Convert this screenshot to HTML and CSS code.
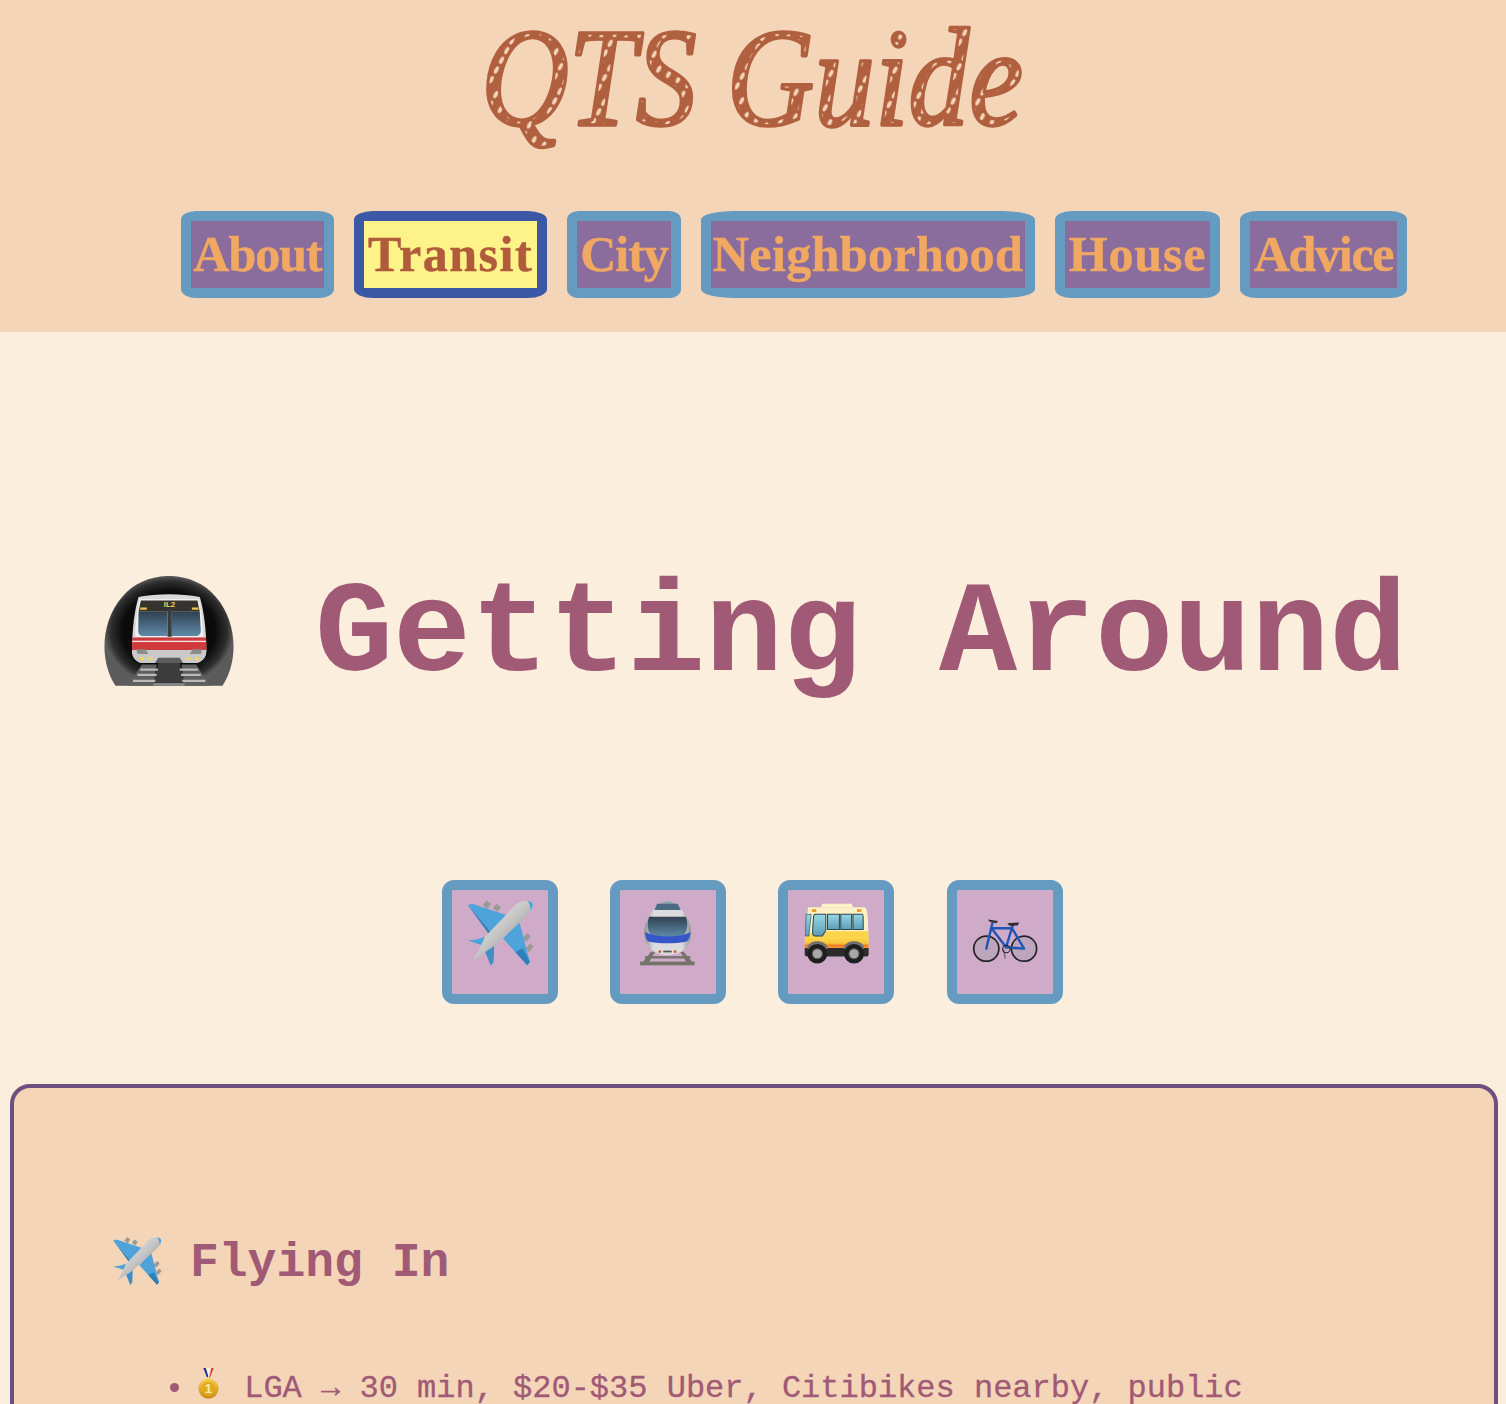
FILE: index.html
```html
<!DOCTYPE html>
<html lang="en">
<head>
    <meta charset="UTF-8">
    <meta name="viewport" content="width=device-width, initial-scale=1.0">
    <title>QTS Guide</title>
    <link rel="stylesheet" href="styles.css">
</head>
<body>
    <!-- shared emoji drawings -->
    <svg class="defs" aria-hidden="true">
        <defs>
            <linearGradient id="silver" x1="0" y1="0" x2="1" y2="1">
                <stop offset="0" stop-color="#f2f2f2"/><stop offset="0.5" stop-color="#c4c4c4"/><stop offset="0.8" stop-color="#8c8c8c"/><stop offset="1" stop-color="#6e6e6e"/>
            </linearGradient>
            <linearGradient id="glass" x1="0" y1="0" x2="0" y2="1">
                <stop offset="0" stop-color="#2f4150"/><stop offset="1" stop-color="#5f8aa8"/>
            </linearGradient>
            <linearGradient id="bodyGrey" x1="0" y1="0" x2="1" y2="0">
                <stop offset="0" stop-color="#8f9296"/><stop offset="0.2" stop-color="#dcdcde"/><stop offset="0.8" stop-color="#dcdcde"/><stop offset="1" stop-color="#8f9296"/>
            </linearGradient>
            <linearGradient id="busBand" x1="0" y1="0" x2="0" y2="1">
                <stop offset="0" stop-color="#fbd850"/><stop offset="0.55" stop-color="#f8c43c"/><stop offset="0.75" stop-color="#f07a2a"/><stop offset="1" stop-color="#f3a032"/>
            </linearGradient>
            <linearGradient id="busGlass" x1="0" y1="0" x2="0" y2="1">
                <stop offset="0" stop-color="#97d8e6"/><stop offset="1" stop-color="#5a9db8"/>
            </linearGradient>
            <linearGradient id="gold" x1="0" y1="0" x2="0" y2="1">
                <stop offset="0" stop-color="#f6d04a"/><stop offset="1" stop-color="#c98a16"/>
            </linearGradient>
            <radialGradient id="tunnel" cx="0.5" cy="0.5" r="0.5">
                <stop offset="0" stop-color="#000"/><stop offset="0.72" stop-color="#0c0c0c"/><stop offset="0.9" stop-color="#2e2e2e"/><stop offset="1" stop-color="#5b5b5b"/>
            </radialGradient>

            <symbol id="plane" viewBox="95 70 200 200">
                <g fill="#9a9a96">
                    <path d="M144 88 L156 74 L168 84 L158 100 Z"/>
                    <path d="M174 96 L186 84 L198 94 L188 108 Z"/>
                    <path d="M260 186 L276 170 L286 180 L272 196 Z"/>
                    <path d="M270 216 L284 200 L294 210 L280 226 Z"/>
                </g>
                <path d="M100 88 L113 84 L222 120 L172 172 Z" fill="#4fa3db"/>
                <path d="M100 88 L172 172 L160 170 Z" fill="#2f7fb8"/>
                <path d="M252 138 L283 255 L275 265 L204 186 Z" fill="#4fa3db"/>
                <path d="M283 255 L275 265 L240 226 L262 215 Z" fill="#2f7fb8"/>
                <path d="M100 192 L125 189 L168 176 L150 208 Z" fill="#4fa3db"/>
                <path d="M150 222 L178 208 L176 255 L168 266 Z" fill="#3f8fc6"/>
                <path d="M291 85 C285 71 258 72 242 86 L150 182 C146 195 126 235 113 252 C130 240 165 218 180 206 L277 117 C290 104 295 95 291 85 Z" fill="url(#silver)"/>
                <path d="M291 85 C288 78 282 76 276 76 C282 84 285 92 284 102 C290 96 293 91 291 85 Z" fill="#4fa3db"/>
            </symbol>

            <symbol id="medal" viewBox="590 870 76 104">
                <path d="M612 876 L619 876 L628 900 L624 906 Z" fill="#1d2f8f"/>
                <path d="M644 876 L637 876 L630 906 L632 906 Z" fill="#d8362b"/>
                <path d="M622 876 L634 876 L628 906 Z" fill="#f4f0e8"/>
                <circle cx="628" cy="939" r="31" fill="url(#gold)"/>
                <circle cx="628" cy="939" r="21" fill="#e2a91f"/>
                <text x="628" y="953" class="medal-num">1</text>
            </symbol>
        </defs>
    </svg>

    <header class="site-header">
        <h1 class="logo">
            <svg class="logo-rope" width="800" height="165" viewBox="0 0 800 165">
                <defs>
                    <pattern id="rope" width="11" height="11" patternUnits="userSpaceOnUse" patternTransform="rotate(28)">
                        <rect width="11" height="11" fill="#b0603f"/>
                        <ellipse cx="5.5" cy="5.5" rx="1.9" ry="4" fill="#f5d5b8"/>
                    </pattern>
                </defs>
                <text class="logo-text" x="128" y="125" textLength="542" lengthAdjust="spacingAndGlyphs">QTS Guide</text>
            </svg>
        </h1>
        <nav class="nav">
            <a class="nav-link w-about" href="#">About</a>
            <a class="nav-link w-transit active" href="#">Transit</a>
            <a class="nav-link w-city" href="#">City</a>
            <a class="nav-link w-hood" href="#">Neighborhood</a>
            <a class="nav-link w-house" href="#">House</a>
            <a class="nav-link w-advice" href="#">Advice</a>
        </nav>
    </header>

    <main>
        <h2 class="page-title">
            <svg class="metro" viewBox="40 35 395 330" aria-hidden="true">
                <path d="M75 365 C25 290 30 170 95 95 C165 10 310 10 380 95 C445 170 450 290 400 365 Z" fill="url(#tunnel)"/>
                <!-- track -->
                <path d="M190 365 L205 296 L270 296 L285 365 Z" fill="#3c3c3c"/>
                <path d="M112 365 L155 300 L200 300 L190 365 Z M362 365 L320 300 L275 300 L285 365 Z" fill="#5e605f"/>
                <g stroke="#b9b9b7" stroke-width="7">
                    <path d="M128 350 H196 M142 332 H200 M150 316 H204 M278 350 H348 M274 332 H334 M270 316 H325"/>
                </g>
                <path d="M190 357 H285 V365 H190 Z" fill="#8d8f8e"/>
                <!-- carriage -->
                <path d="M145 95 C200 84 275 84 331 95 C342 130 351 190 351 260 C351 280 335 296 315 296 L160 296 C140 296 125 280 125 260 C125 190 134 130 145 95 Z" fill="#d9d9d9"/>
                <path d="M148 101 H328 C335 135 340 170 341 217 H135 C136 170 141 135 148 101 Z" fill="#f0f0f0"/>
                <path d="M152 106 H324 L331 140 H145 Z" fill="#34332e"/>
                <path d="M145 140 H233 V214 H158 C149 214 144 208 144 198 Z" fill="url(#glass)"/>
                <path d="M246 140 H331 L334 198 C334 208 329 214 318 214 H246 Z" fill="url(#glass)"/>
                <rect x="233" y="132" width="13" height="84" fill="#3a3d40"/>
                <rect x="150" y="127" width="20" height="7" fill="#e9c24a"/>
                <rect x="307" y="127" width="20" height="7" fill="#e9c24a"/>
                <text x="239" y="126" class="metro-code">IL2</text>
                <path d="M126 218 H350 L351 256 H125 Z" fill="#cf3a3f"/>
                <rect x="126" y="228" width="224" height="4" fill="#f4e4e2"/>
                <path d="M125 256 H351 C350 280 335 296 315 296 L160 296 C140 296 126 280 125 256 Z" fill="#c9c9c9"/>
                <path d="M138 254 H166 L175 268 H142 Z M338 254 H310 L300 268 H334 Z" fill="#8b8b8b"/>
                <g fill="#f6d55c"><circle cx="155" cy="283" r="6"/><circle cx="180" cy="283" r="6"/><circle cx="297" cy="283" r="6"/><circle cx="322" cy="283" r="6"/></g>
                <path d="M205 280 H270 L280 296 H195 Z" fill="#5c5c5c"/>
            </svg>
            <span class="page-title-text">Getting Around</span>
        </h2>

        <div class="mode-row">
            <a class="mode-btn" href="#">
                <svg class="mode-icon"><use href="#plane"/></svg>
            </a>
            <a class="mode-btn" href="#">
                <svg class="mode-icon" viewBox="615 70 170 200">
                    <g fill="#76736a">
                        <rect x="618" y="254" width="160" height="11"/>
                        <path d="M650 225 L626 256 H644 L662 225 Z M746 225 L772 256 H754 L736 225 Z"/>
                        <rect x="632" y="238" width="134" height="7"/>
                    </g>
                    <path d="M698 76 C665 82 630 125 630 170 C630 208 655 233 699 235 C745 233 768 208 768 170 C768 125 732 82 698 76 Z" fill="url(#bodyGrey)"/>
                    <path d="M698 76 C685 78 672 84 662 100 H736 C726 84 712 78 698 76 Z" fill="#8ea3b0"/>
                    <path d="M668 84 H728 L738 102 H660 Z" fill="#4b6b85"/>
                    <path d="M645 122 H752 C760 135 758 168 745 176 C715 183 680 183 652 176 C638 168 638 135 645 122 Z" fill="url(#glass)"/>
                    <path d="M633 167 C665 184 735 184 766 167 C764 188 758 194 752 196 C715 202 680 202 646 196 C638 194 634 186 633 167 Z" fill="#3556c9"/>
                    <g fill="#d9532c"><circle cx="676" cy="225" r="4"/><circle cx="721" cy="225" r="4"/></g>
                    <rect x="686" y="222" width="25" height="5" fill="#555"/>
                </svg>
            </a>
            <a class="mode-btn" href="#">
                <svg class="mode-icon" viewBox="100 73 200 200">
                    <path d="M156 97 L160 87 H246 L250 97 Z" fill="#fdf3c8"/>
                    <path d="M118 97 H284 C291 100 294 110 295 170 L296 218 H108 L110 170 Z" fill="#fbf1c4"/>
                    <path d="M108 185 H296 V218 H108 Z" fill="url(#busBand)"/>
                    <path d="M110 176 C145 172 175 168 180 168 H295 V185 H108 Z" fill="#fbd44a"/>
                    <path d="M112 118 L127 118 L120 182 L110 182 Z" fill="url(#busGlass)" stroke="#35525e" stroke-width="2"/>
                    <path d="M140 118 H170 V165 L160 182 H140 C133 182 130 176 131 168 L134 124 C135 120 137 118 140 118 Z" fill="url(#busGlass)" stroke="#2c4650" stroke-width="3"/>
                    <path d="M175 118 H210 V163 H175 Z M214 118 H246 V163 H214 Z M250 118 H278 C280 118 280 122 280 163 H250 Z" fill="url(#busGlass)" stroke="#2c4650" stroke-width="3"/>
                    <rect x="129" y="103" width="13" height="8" fill="#ee9a26"/><rect x="262" y="103" width="13" height="8" fill="#ee9a26"/>
                    <path d="M108 217 H296 V236 C296 240 292 242 288 242 H116 C112 242 108 240 108 236 Z" fill="#2c2c2c"/>
                    <g fill="#707070"><path d="M115 220 C115 190 175 190 175 220 Z"/><path d="M223 220 C223 190 283 190 283 220 Z"/></g>
                    <g fill="#1e1e1e"><circle cx="145" cy="234" r="29"/><circle cx="253" cy="234" r="29"/></g>
                    <g fill="#a8a8a8" stroke="#555" stroke-width="3"><circle cx="145" cy="234" r="15"/><circle cx="253" cy="234" r="15"/></g>
                </svg>
            </a>
            <a class="mode-btn" href="#">
                <svg class="mode-icon" viewBox="605 75 200 200">
                    <g fill="#a79fae" fill-opacity="0.45" stroke="#232326" stroke-width="5">
                        <circle cx="650" cy="221" r="37"/><circle cx="761" cy="221" r="37"/>
                    </g>
                    <g fill="none" stroke="#1f55b5" stroke-width="7" stroke-linejoin="round" stroke-linecap="round">
                        <path d="M668 146 L650 221"/>
                        <path d="M670 161 H725"/>
                        <path d="M668 164 L708 217 L761 221 L725 160"/>
                        <path d="M728 152 L708 217"/>
                    </g>
                    <path d="M655 135 L684 140 L680 146 L660 142 Z M712 146 L747 144 L742 153 L718 154 Z" fill="#2d2d2f"/>
                    <path d="M700 222 L706 250" stroke="#6b6b6b" stroke-width="4"/>
                    <circle cx="709" cy="222" r="11" fill="none" stroke="#232326" stroke-width="3"/>
                </svg>
            </a>
        </div>

        <section class="card">
            <h3 class="card-title">
                <svg class="card-icon"><use href="#plane"/></svg>
                <span class="card-title-text">Flying In</span>
            </h3>
            <ul class="tips">
                <li>
                    <svg class="medal"><use href="#medal"/></svg>
                    <span>LGA → 30 min, $20-$35 Uber, Citibikes nearby, public</span>
                </li>
            </ul>
        </section>
    </main>
</body>
</html>
```

FILE: styles.css
```css
html, body {
    height: 100%;
}

body {
    margin: 0;
    overflow: hidden;
    background-color: #fbeedd;
    color: #a05a75;
    font-family: "Liberation Mono", monospace;
}

.defs {
    position: absolute;
    width: 0;
    height: 0;
}

/* header */
.site-header {
    height: 332px;
    background-color: #f5d5b8;
}

.logo {
    margin: 0;
    height: 211px;
    display: flex;
    justify-content: center;
}

.logo-rope {
    display: block;
}

.logo-text {
    font-family: "Liberation Serif", serif;
    font-style: italic;
    font-weight: 400;
    font-size: 140px;
    fill: url(#rope);
    stroke: #b0603f;
    stroke-width: 3.5px;
    stroke-linejoin: round;
}

.nav {
    display: flex;
    justify-content: center;
    gap: 20px;
    padding-left: 82px;
}

.nav-link {
    display: block;
    height: 67px;
    line-height: 67px;
    border: 10px solid #659bc0;
    border-radius: 10%;
    background-color: #8a6d9c;
    background-clip: padding-box;
    color: #f0a862;
    font-family: "Liberation Serif", serif;
    font-weight: 700;
    font-size: 50px;
    text-align: center;
    text-decoration: none;
    white-space: nowrap;
    -webkit-text-stroke: 0.5px currentColor;
}

.nav-link.active {
    border-color: #3a58a5;
    background-color: #fef388;
    color: #b05c3c;
}

.w-about { width: 133px; letter-spacing: -1px; }
.w-transit { width: 173px; letter-spacing: 1.5px; }
.w-city { width: 94px; letter-spacing: -1px; }
.w-hood { width: 314px; letter-spacing: 0.4px; }
.w-house { width: 145px; letter-spacing: 0.8px; }
.w-advice { width: 147px; letter-spacing: -1.3px; }

/* big heading */
.page-title {
    display: flex;
    align-items: flex-start;
    gap: 81px;
    height: 548px;
    margin: 0;
    padding: 244px 0 0 104px;
    box-sizing: border-box;
    font-size: 130px;
    line-height: 110px;
    font-weight: 700;
}

.page-title-text {
    padding-top: 5px;
}

.metro {
    display: block;
    width: 130px;
    height: 111px;
    flex: none;
}

/* transport buttons */
.mode-row {
    display: flex;
    justify-content: center;
    gap: 52.2px;
    padding-right: 1.4px;
}

.mode-btn {
    display: block;
    width: 96px;
    height: 104px;
    border: 10px solid #659bc0;
    border-radius: 12px;
    background-color: #cfaac9;
    background-clip: padding-box;
}

.mode-icon {
    display: block;
    width: 68px;
    height: 68px;
    margin: 9px auto 0;
}

/* flying in card */
.card {
    margin: 80px 8px 0 10px;
    height: 400px;
    padding: 146px 0 0 98px;
    border: 4px solid #6d4f80;
    border-radius: 20px;
    background-color: #f5d5b8;
}

.card-title {
    display: flex;
    align-items: center;
    gap: 28px;
    margin: 0;
    font-size: 48px;
    line-height: 50px;
    font-weight: 700;
}

.card-title-text {
    padding-top: 4px;
}

.card-icon {
    display: block;
    width: 50px;
    height: 50px;
}

.tips {
    margin: 78px 0 0;
    padding: 0 0 0 83px;
    font-size: 32px;
    line-height: 40px;
    -webkit-text-stroke: 0.3px currentColor;
}

.medal {
    display: inline-block;
    width: 25px;
    height: 34px;
    vertical-align: -3px;
    margin: 0 4px 0 1px;
}

.medal-num {
    font-family: "Liberation Sans", sans-serif;
    font-weight: 700;
    font-size: 40px;
    fill: #fbe9a0;
    text-anchor: middle;
}

.metro-code {
    font-family: "Liberation Sans", sans-serif;
    font-weight: 700;
    font-size: 24px;
    fill: #e9d25a;
    text-anchor: middle;
}
```
